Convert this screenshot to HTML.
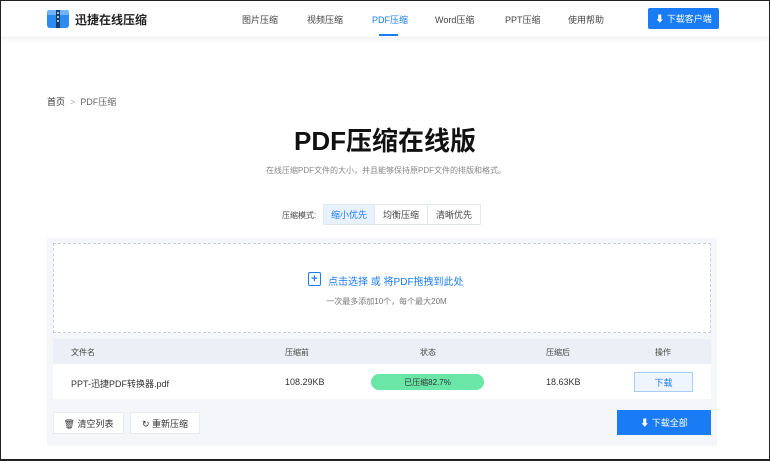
<!DOCTYPE html>
<html><head><meta charset="utf-8"><style>
*{margin:0;padding:0;box-sizing:border-box}
body{width:770px;height:461px;overflow:hidden;background:#fff;font-family:"Liberation Sans","Noto Sans CJK SC",sans-serif;position:relative;color:#333}
.frame{position:absolute;left:0;top:0;width:770px;height:461px;border:1px solid #222;border-bottom:2px solid #222;pointer-events:none;z-index:10}
.hdr{position:absolute;left:0;top:0;width:770px;height:37px;background:#fff;box-shadow:0 2px 4px rgba(0,0,0,.07)}
.a{position:absolute;white-space:nowrap}
.nav{font-size:9px;color:#444;top:13px}
.btn{position:absolute;display:flex;align-items:center;justify-content:center;font-size:9px}
</style></head><body>
<div class="hdr">
 <svg class="a" style="left:47px;top:9px" width="22" height="20" viewBox="0 0 22 20"><rect x="0" y="1" width="22" height="18" rx="3" fill="#2c8bf0"/><rect x="0" y="1" width="22" height="5" rx="2" fill="#6fb4ff"/><rect x="9" y="1" width="4" height="18" fill="#1b3b66"/><rect x="10" y="3" width="2" height="2" fill="#9cc"/><rect x="10" y="7" width="2" height="2" fill="#9cc"/><rect x="10" y="11" width="2" height="2" fill="#9cc"/></svg>
 <div class="a" style="left:75px;top:11px;font-size:12px;font-weight:bold;color:#222">迅捷在线压缩</div>
 <div class="a nav" style="left:242px">图片压缩</div>
 <div class="a nav" style="left:307px">视频压缩</div>
 <div class="a nav" style="left:372px;color:#1a7cf5">PDF压缩</div>
 <div class="a" style="left:379px;top:34px;width:19px;height:2px;background:#1a7cf5"></div>
 <div class="a nav" style="left:435px">Word压缩</div>
 <div class="a nav" style="left:505px">PPT压缩</div>
 <div class="a nav" style="left:568px">使用帮助</div>
 <div class="btn" style="left:648px;top:8px;width:71px;height:21px;background:#1a7cf5;color:#fff;border-radius:2px">⬇&nbsp;下载客户端</div>
</div>
<div class="a" style="left:47px;top:95px;font-size:9px;color:#333">首页 <span style="color:#aaa">&nbsp;&gt;&nbsp;</span> <span style="color:#666">PDF压缩</span></div>
<div class="a" style="left:0;width:770px;text-align:center;top:121px;font-size:26px;font-weight:bold;color:#111">PDF压缩在线版</div>
<div class="a" style="left:0;width:770px;text-align:center;top:165px;font-size:8px;color:#888;padding-left:2px">在线压缩PDF文件的大小，并且能够保持原PDF文件的排版和格式。</div>
<div class="a" style="left:282px;top:210px;font-size:8px;color:#444">压缩模式:</div>
<div class="btn" style="left:323px;top:204px;width:52px;height:21px;background:#e8f2fe;color:#1a7cf5;border:1px solid #e3e7ee">缩小优先</div>
<div class="btn" style="left:375px;top:204px;width:53px;height:21px;background:#fff;color:#444;border:1px solid #e3e7ee;border-left:none">均衡压缩</div>
<div class="btn" style="left:428px;top:204px;width:53px;height:21px;background:#fff;color:#444;border:1px solid #e3e7ee;border-left:none">清晰优先</div>
<div class="a" style="left:47px;top:238px;width:670px;height:208px;background:#f4f6fa"></div>
<div class="a" style="left:53px;top:243px;width:658px;height:90px;background:#fff;border:1px dashed #c9ced8"></div>
<div class="btn" style="left:308px;top:272px;width:13px;height:14px;border:1px solid #1a7cf5;border-radius:2px;color:#1a7cf5;font-size:11px;font-weight:bold">+</div>
<div class="a" style="left:328px;top:273px;font-size:10px;color:#1a7cf5">点击选择 或 将PDF拖拽到此处</div>
<div class="a" style="left:0;width:770px;text-align:center;top:296px;font-size:8px;color:#777;padding-left:3px">一次最多添加10个，每个最大20M</div>
<div class="a" style="left:53px;top:339px;width:658px;height:25px;background:#eceff5"></div>
<div class="a" style="left:53px;top:364px;width:658px;height:35px;background:#fff"></div>
<div class="a" style="left:71px;top:347px;font-size:8px;color:#444">文件名</div>
<div class="a" style="left:285px;top:347px;font-size:8px;color:#444">压缩前</div>
<div class="a" style="left:420px;top:347px;font-size:8px;color:#444">状态</div>
<div class="a" style="left:546px;top:347px;font-size:8px;color:#444">压缩后</div>
<div class="a" style="left:655px;top:347px;font-size:8px;color:#444">操作</div>
<div class="a" style="left:71px;top:377px;font-size:9px;color:#333">PPT-迅捷PDF转换器.pdf</div>
<div class="a" style="left:285px;top:377px;font-size:9px;color:#333">108.29KB</div>
<div class="btn" style="left:371px;top:374px;width:113px;height:16px;background:#6ae6a6;border-radius:8px;color:#333;font-size:8px">已压缩82.7%</div>
<div class="a" style="left:546px;top:377px;font-size:9px;color:#333">18.63KB</div>
<div class="btn" style="left:634px;top:372px;width:59px;height:20px;background:#eef5fe;border:1px solid #a9cdf8;color:#1a7cf5">下载</div>
<div class="btn" style="left:53px;top:412px;width:71px;height:22px;background:#fff;border:1px solid #e8ebf0;color:#333">🗑&nbsp;清空列表</div>
<div class="btn" style="left:130px;top:412px;width:70px;height:22px;background:#fff;border:1px solid #e8ebf0;color:#333">↻&nbsp;重新压缩</div>
<div class="btn" style="left:617px;top:410px;width:94px;height:25px;background:#1a7cf5;color:#fff">⬇&nbsp;下载全部</div>
<div class="frame"></div>
</body></html>
